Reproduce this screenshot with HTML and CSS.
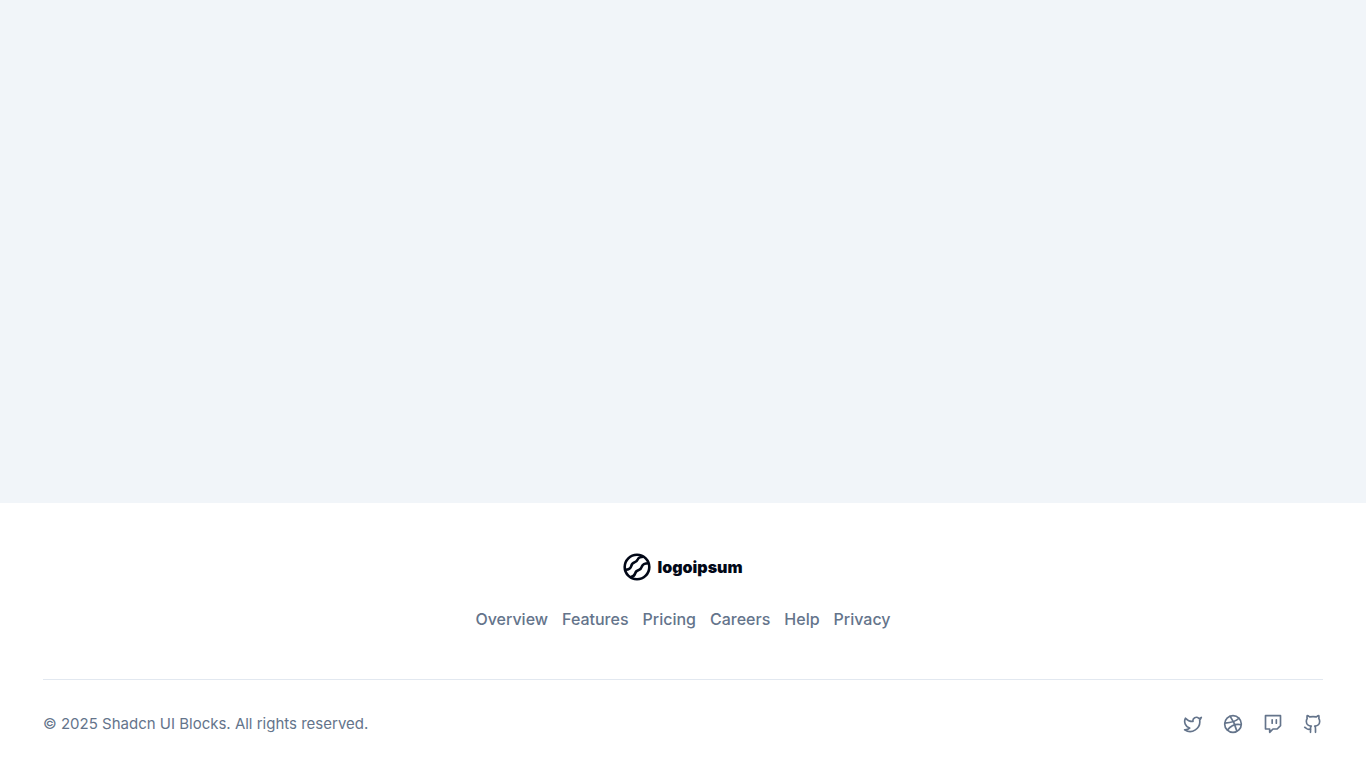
FILE: index.html
```html
<!DOCTYPE html>
<html lang="en">

<head>
  <meta charset="UTF-8">
  <meta name="viewport" content="width=device-width, initial-scale=1.0">
  <title>Footer</title>
  <link rel="stylesheet" href="styles.css">
</head>

<body>
  <main class="content"></main>
  <footer class="footer">
    <div class="container footer-top">
      <a href="#" class="logo">
        <svg class="logo-mark" viewBox="0 0 28 28" fill="none" stroke="currentColor" stroke-width="2.6" aria-hidden="true">
          <circle cx="14" cy="14" r="12.3" />
          <path d="M2.5 16.8C5.5 16.6 7.6 15.6 8.2 13.2C8.8 10.6 9.8 9.8 11.7 9.3C13.8 8.8 14.2 7.6 14.8 6.3C15.6 4.4 17.6 4 20.5 3.8" />
          <path d="M7.3 24.2C10.2 23.7 11.6 22.6 12.2 20.4C12.8 18 14 17.4 15.8 16.9C18 16.3 18.4 15 19 13.2C19.8 11 21.5 10.3 25.5 10.2" />
        </svg>
        <span>logoipsum</span>
      </a>
      <nav>
        <ul class="footer-links">
          <li><a href="#">Overview</a></li>
          <li><a href="#">Features</a></li>
          <li><a href="#">Pricing</a></li>
          <li><a href="#">Careers</a></li>
          <li><a href="#">Help</a></li>
          <li><a href="#">Privacy</a></li>
        </ul>
      </nav>
    </div>
    <div class="container footer-bottom">
      <span class="copyright">&copy; 2025 Shadcn UI Blocks. All rights reserved.</span>
      <div class="social">
        <a href="#" aria-label="Twitter">
          <svg viewBox="0 0 24 24">
            <path d="M22 4s-.7 2.1-2 3.4c1.6 10-9.4 17.3-18 11.6 2.2.1 4.4-.6 6-2C3 15.5.5 9.6 3 5c2.2 2.6 5.6 4.1 9 4-.9-4.2 4-6.6 7-3.8 1.1 0 3-1.2 3-1.2z" />
          </svg>
        </a>
        <a href="#" aria-label="Dribbble">
          <svg viewBox="0 0 24 24">
            <circle cx="12" cy="12" r="10" />
            <path d="M19.13 5.09C15.22 9.14 10 10.44 2.25 10.94" />
            <path d="M21.75 12.84c-6.62-1.41-12.14 1-16.38 6.32" />
            <path d="M8.56 2.75c4.37 6 6 9.42 8 17.72" />
          </svg>
        </a>
        <a href="#" aria-label="Twitch">
          <svg viewBox="0 0 24 24">
            <path d="M21 2H3v16h5v4l4-4h5l4-4V2zm-10 9V7m5 4V7" />
          </svg>
        </a>
        <a href="#" aria-label="GitHub">
          <svg viewBox="0 0 24 24">
            <path d="M15 22v-4a4.8 4.8 0 0 0-1-3.5c3 0 6-2 6-5.5.08-1.25-.27-2.48-1-3.5.28-1.15.28-2.35 0-3.5 0 0-1 0-3 1.5-2.64-.5-5.36-.5-8 0C6 2 5 2 5 2c-.3 1.15-.3 2.35 0 3.5A5.403 5.403 0 0 0 4 9c0 3.5 3 5.5 6 5.5-.39.49-.68 1.05-.85 1.65-.17.6-.22 1.23-.15 1.85v4" />
            <path d="M9 18c-4.51 2-5-2-7-2" />
          </svg>
        </a>
      </div>
    </div>
  </footer>
</body>

</html>
```
FILE: styles.css
```css
* {
  box-sizing: border-box;
}

body {
  display: flex;
  flex-direction: column;
  min-height: 100vh;
  margin: 0;
  font-family: Inter, sans-serif;
  font-size: 16px;
  line-height: 24px;
  color: #020817;
  background-color: #fff;
}

a {
  color: inherit;
  text-decoration: none;
}

.content {
  flex: 1;
  background-color: #f1f5f9;
}

.footer {
  padding: 0 24px;
  color: #64748b;
}

.container {
  max-width: 1280px;
  margin: 0 auto;
}

.footer-top {
  display: flex;
  flex-direction: column;
  align-items: center;
  gap: 24px;
  padding: 48px 0;
}

.logo {
  display: flex;
  align-items: center;
  gap: 6px;
  height: 32px;
  font-size: 16px;
  font-weight: 900;
  color: #020817;
}

.logo-mark {
  width: 28px;
  height: 28px;
}

.footer-links {
  display: flex;
  flex-wrap: wrap;
  gap: 14px;
  margin: 0;
  padding: 0;
  list-style: none;
  font-weight: 500;
}

.footer-links a:hover,
.social a:hover {
  color: #020817;
}

.footer-bottom {
  display: flex;
  flex-wrap: wrap;
  align-items: center;
  justify-content: space-between;
  gap: 24px;
  padding: 32px 0;
  border-top: 1px solid #e2e8f0;
}

.copyright {
  font-size: 15px;
}

.social {
  display: flex;
  gap: 20px;
}

.social a {
  display: flex;
}

.social svg {
  width: 20px;
  height: 20px;
  fill: none;
  stroke: currentColor;
  stroke-width: 2;
  stroke-linecap: round;
  stroke-linejoin: round;
}
```
